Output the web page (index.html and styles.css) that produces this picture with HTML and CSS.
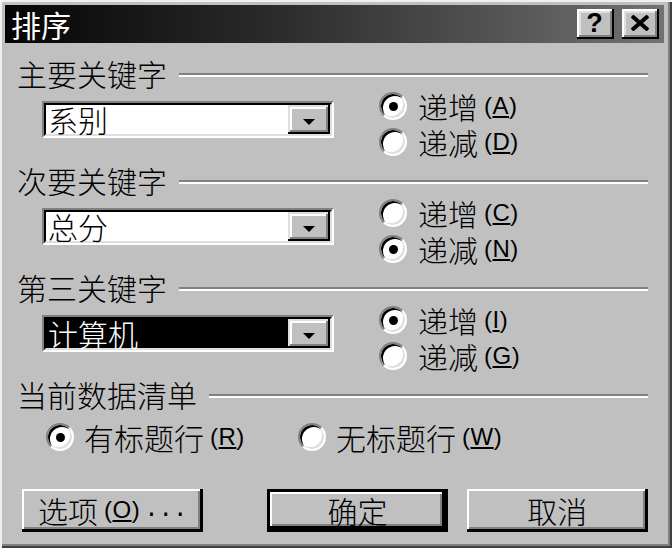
FILE: index.html
```html
<!DOCTYPE html>
<html lang="zh">
<head>
<meta charset="utf-8">
<link rel="stylesheet" href="styles.css">
</head>
<body>
<div class="window">
  <div class="titlebar">
    <span class="title">排序</span>
    <div class="tbtns">
      <div class="tbtn q">?</div>
      <div class="tbtn"><svg width="20" height="16" viewBox="0 0 20 16"><path d="M2 1 L18 15 M18 1 L2 15" stroke="#000" stroke-width="4" fill="none"/></svg></div>
    </div>
  </div>
  <div class="content">
    <section class="group">
      <div class="ghead"><span class="glabel">主要关键字</span><div class="rule"></div></div>
      <div class="gbody">
        <div class="combo"><div class="combo-in"><div class="field">系别</div><div class="dd"><i class="arrow"></i></div></div></div>
        <div class="radios">
          <div class="radio"><span class="circle on"></span>递增<span class="acc">(<u>A</u>)</span></div>
          <div class="radio"><span class="circle"></span>递减<span class="acc">(<u>D</u>)</span></div>
        </div>
      </div>
    </section>
    <section class="group">
      <div class="ghead"><span class="glabel">次要关键字</span><div class="rule"></div></div>
      <div class="gbody">
        <div class="combo"><div class="combo-in"><div class="field">总分</div><div class="dd"><i class="arrow"></i></div></div></div>
        <div class="radios">
          <div class="radio"><span class="circle"></span>递增<span class="acc">(<u>C</u>)</span></div>
          <div class="radio"><span class="circle on"></span>递减<span class="acc">(<u>N</u>)</span></div>
        </div>
      </div>
    </section>
    <section class="group">
      <div class="ghead"><span class="glabel">第三关键字</span><div class="rule"></div></div>
      <div class="gbody">
        <div class="combo"><div class="combo-in sel"><div class="field">计算机</div><div class="dd"><i class="arrow"></i></div></div></div>
        <div class="radios">
          <div class="radio"><span class="circle on"></span>递增<span class="acc">(<u>I</u>)</span></div>
          <div class="radio"><span class="circle"></span>递减<span class="acc">(<u>G</u>)</span></div>
        </div>
      </div>
    </section>
    <section class="group last">
      <div class="ghead"><span class="glabel">当前数据清单</span><div class="rule"></div></div>
      <div class="grow">
        <div class="radio wide"><span class="circle on"></span>有标题行<span class="acc">(<u>R</u>)</span></div>
        <div class="radio"><span class="circle"></span>无标题行<span class="acc">(<u>W</u>)</span></div>
      </div>
    </section>
    <div class="btnrow">
      <div class="btn first">选项<span class="acc">(<u>O</u>)</span><span class="dots">...</span></div>
      <div class="btn default">确定</div>
      <div class="btn">取消</div>
    </div>
  </div>
</div>
</body>
</html>
```
FILE: styles.css
```css
html, body { margin: 0; padding: 0; background: #c0c0c0; }
.window {
  width: 672px; height: 548px; box-sizing: border-box;
  background: #c0c0c0;
  padding: 5px 8px 0 5px;
  box-shadow: inset 2px 2px 0 #f0f0f0, inset -2px -2px 0 #404040, inset -4px -4px 0 #808080;
  font-family: "Noto Sans CJK SC", "Noto Sans", sans-serif;
  font-weight: 300;
  color: #000;
}
.titlebar {
  height: 38px; display: flex; align-items: center; justify-content: space-between;
  background: linear-gradient(90deg, #050505 0%, #2a2a2a 40%, #727272 100%);
  padding: 0 5px 0 6px;
}
.title { color: #fff; font-size: 30px; line-height: 30px; font-weight: 400; }
.tbtns { display: flex; gap: 8px; }
.tbtn {
  width: 37px; height: 30px; box-sizing: border-box; background: #c0c0c0;
  box-shadow: inset -2px -2px 0 #000, inset 2px 2px 0 #fff, inset -4px -4px 0 #808080, inset 4px 4px 0 #dfdfdf;
  display: flex; align-items: center; justify-content: center;
  padding: 0 2px 2px 0;
}
.tbtn.q { font-family: "Liberation Sans", sans-serif; font-weight: 700; font-size: 27px; line-height: 1; }
.content { padding: 15px 16px 0 12px; }
.ghead { display: flex; align-items: center; height: 30px; }
.glabel { font-size: 30px; line-height: 30px; white-space: nowrap; }
.rule { flex: 1; margin: 4px 0 0 12px; height: 2px; background: #808080; border-bottom: 2px solid #fff; }
.gbody { display: flex; height: 72px; margin-bottom: 5px; }
.combo {
  margin: 13px 0 0 25px; width: 292px; height: 37px; box-sizing: border-box;
  border: 2px solid; border-color: #808080 #fff #fff #808080;
}
.combo-in {
  height: 100%; box-sizing: border-box; display: flex; align-items: center; background: #fff;
  border: 2px solid; border-color: #000 #dfdfdf #dfdfdf #000;
}
.combo-in.sel { background: #000; color: #fff; }
.field { flex: 1; font-size: 30px; line-height: 29px; padding-left: 2px; white-space: nowrap; }
.dd {
  width: 42px; height: 100%; box-sizing: border-box; background: #c0c0c0;
  box-shadow: inset -2px -2px 0 #000, inset 2px 2px 0 #dfdfdf, inset -4px -4px 0 #808080, inset 4px 4px 0 #fff;
  display: flex; align-items: center; justify-content: center; padding-top: 4px;
}
.arrow { width: 0; height: 0; border-left: 6px solid transparent; border-right: 6px solid transparent; border-top: 6px solid #000; }
.radios { margin-left: 45px; display: flex; flex-direction: column; }
.radio { height: 36px; display: flex; align-items: center; font-size: 30px; line-height: 30px; white-space: nowrap; }
.circle {
  width: 28px; height: 28px; box-sizing: border-box; border-radius: 50%; background: #fff;
  border: 2px solid; border-color: #808080 #fff #fff #808080;
  box-shadow: inset 2px 2px 0 #000, inset -2px -2px 0 #dfdfdf;
  margin-right: 11px; display: flex; align-items: center; justify-content: center; flex: none;
}
.circle.on::after { content: ""; width: 9px; height: 9px; border-radius: 50%; background: #000; }
.acc { font-family: "Liberation Sans", sans-serif; font-weight: 400; font-size: 24px; line-height: 26px; margin-left: 6px; letter-spacing: 0.5px; }
.acc u { text-decoration-thickness: 2px; text-underline-offset: 2px; }
.grow { display: flex; align-items: center; height: 36px; margin-top: 10px; padding-left: 29px; }
.grow .circle { margin-right: 10px; }
.radio.wide { width: 252px; }
.btnrow { display: flex; margin-top: 34px; padding-left: 5px; }
.btn {
  width: 182px; height: 43px; box-sizing: border-box; background: #c0c0c0;
  box-shadow: inset -3px -3px 0 #000, inset 2px 2px 0 #fff, inset -5px -5px 0 #808080;
  font-size: 30px; line-height: 30px; display: flex; align-items: center; justify-content: center; padding-bottom: 2px;
}
.btn.first { margin-right: 64px; }
.btn.default { width: 181px; border: 3px solid #000; margin-right: 19px; }
.dots { font-family: "Liberation Mono", monospace; font-size: 24px; line-height: 26px; margin-left: 4px; letter-spacing: 0; }
```
